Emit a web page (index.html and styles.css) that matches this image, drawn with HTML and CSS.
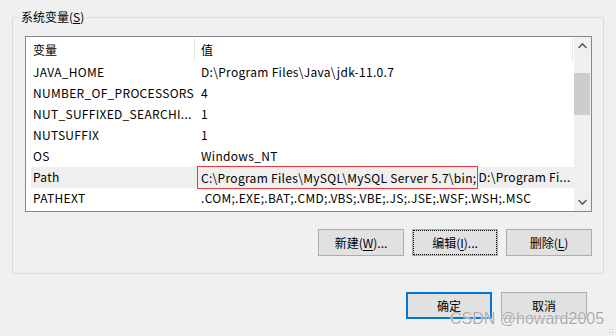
FILE: index.html
```html
<!DOCTYPE html>
<html lang="zh-CN">

<head>
    <meta charset="UTF-8" />
    <title>环境变量</title>
    <link rel="stylesheet" href="styles.css">
</head>

<body>
    <div class="dialog">
        <div class="group">
            <div class="legend">系统变量(<u>S</u>)</div>

            <div class="list">
                <div class="list-body">
                    <div class="list-head">
                        <span class="h1">变量</span>
                        <span class="h2">值</span>
                    </div>
                    <div class="row"><span class="c1">JAVA_HOME</span><span class="c2">D:\Program Files\Java\jdk-11.0.7</span></div>
                    <div class="row"><span class="c1">NUMBER_OF_PROCESSORS</span><span class="c2">4</span></div>
                    <div class="row"><span class="c1">NUT_SUFFIXED_SEARCHI...</span><span class="c2">1</span></div>
                    <div class="row"><span class="c1">NUTSUFFIX</span><span class="c2">1</span></div>
                    <div class="row"><span class="c1">OS</span><span class="c2">Windows_NT</span></div>
                    <div class="row selected"><span class="c1">Path</span><span class="c2 open"><span class="mark">C:\Program Files\MySQL\MySQL Server 5.7\bin;</span>D:\Program Fi...</span></div>
                    <div class="row"><span class="c1">PATHEXT</span><span class="c2">.COM;.EXE;.BAT;.CMD;.VBS;.VBE;.JS;.JSE;.WSF;.WSH;.MSC</span></div>
                </div>

                <div class="scrollbar">
                    <div class="sb-btn">
                        <svg width="17" height="17" viewBox="0 0 17 17"><polyline points="4.5,11 8.5,7 12.5,11" fill="none" stroke="#606060" stroke-width="1.6" /></svg>
                    </div>
                    <div class="sb-track">
                        <div class="sb-thumb"></div>
                    </div>
                    <div class="sb-btn">
                        <svg width="17" height="17" viewBox="0 0 17 17"><polyline points="4.5,6 8.5,10 12.5,6" fill="none" stroke="#606060" stroke-width="1.6" /></svg>
                    </div>
                </div>
            </div>

            <div class="button-row">
                <span class="btn">新建(<u>W</u>)...</span>
                <span class="btn focused">编辑(<u>I</u>)...</span>
                <span class="btn">删除(<u>L</u>)</span>
            </div>
        </div>

        <div class="dialog-buttons">
            <span class="btn default">确定</span>
            <span class="btn">取消</span>
        </div>

        <div class="watermark">CSDN @howard2005</div>
        <div class="grip"></div>
    </div>
</body>

</html>
```

FILE: styles.css
```css
* {
    margin: 0;
    padding: 0;
    box-sizing: border-box;
}

body {
    font-family: "Noto Sans CJK SC", sans-serif;
    font-size: 12px;
    color: #000;
    background: #f0f0f0;
}

.dialog {
    position: relative;
    width: 616px;
    height: 336px;
    padding-top: 17px;
    overflow: hidden;
}

/* Group box */
.group {
    position: relative;
    margin: 0 12px;
    height: 257px;
    border: 1px solid #dcdcdc;
    padding: 18px 11px 0 12px;
}

.legend {
    position: absolute;
    top: -9px;
    left: 6px;
    padding: 0 2px;
    line-height: 16px;
    background: #f0f0f0;
}

/* List view */
.list {
    display: flex;
    height: 176px;
    border: 1px solid #828790;
    background: #fff;
}

.list-body {
    flex: 1;
}

.list-head {
    display: flex;
    height: 25px;
    align-items: center;
}

.list-head span {
    height: 24px;
    line-height: 23px;
    border-right: 1px solid #e5e5e5;
}

.list-head .h1 {
    width: 169px;
    padding-left: 7px;
}

.list-head .h2 {
    width: 378px;
    padding-left: 6px;
}

.row {
    display: flex;
    height: 21px;
    line-height: 20px;
    margin-left: 5px;
    width: 543px;
    white-space: nowrap;
    letter-spacing: 0.3px;
}

.row.selected {
    background: #efefef;
}

.c1 {
    width: 166px;
    padding-left: 2px;
    overflow: hidden;
}

.c2 {
    flex: 1;
    padding-left: 4px;
    overflow: hidden;
}

.c2.open {
    overflow: visible;
}

.mark {
    display: inline-block;
    height: 23px;
    line-height: 21px;
    margin: -1px 0 -1px -4px;
    padding: 0 1px 0 3px;
    border: 1px solid #ee3a3a;
    vertical-align: top;
}

/* Scrollbar */
.scrollbar {
    width: 17px;
    display: flex;
    flex-direction: column;
    background: #f0f0f0;
}

.sb-btn {
    height: 17px;
}

.sb-btn svg {
    display: block;
}

.sb-track {
    flex: 1;
    padding: 19px 1px 0 0;
}

.sb-thumb {
    height: 42px;
    background: #cdcdcd;
}

/* Buttons */
.button-row {
    display: flex;
    justify-content: flex-end;
    gap: 8px;
    margin-top: 17px;
}

.btn {
    display: flex;
    align-items: center;
    justify-content: center;
    width: 86px;
    height: 27px;
    background: #e1e1e1;
    border: 1px solid #adadad;
}

.btn u {
    text-underline-offset: 2px;
}

.btn.focused {
    outline: 1px dotted #000;
    outline-offset: -2px;
}

.btn.default {
    border: 2px solid #0078d7;
}

.dialog-buttons {
    display: flex;
    justify-content: flex-end;
    gap: 9px;
    margin: 18px 29px 0 0;
}

/* Overlays */
.watermark {
    position: absolute;
    left: 450px;
    top: 310px;
    font-family: "Liberation Sans", sans-serif;
    font-size: 16px;
    color: rgba(110, 110, 110, 0.6);
    text-shadow: 0 0 1px #fff, 0 0 1px #fff;
}

.grip {
    position: absolute;
    right: 2px;
    bottom: 2px;
    width: 6px;
    height: 6px;
    background: radial-gradient(circle, #b0b0b0 0.6px, transparent 1px) 0 0 / 3px 3px;
}
```
